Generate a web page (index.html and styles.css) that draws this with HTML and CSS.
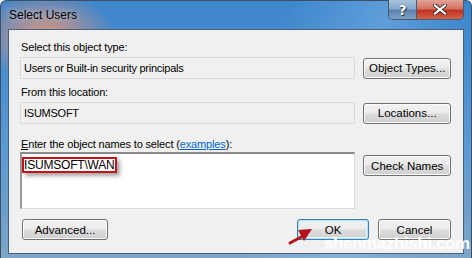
FILE: index.html
```html
<!DOCTYPE html>
<html>
<head>
<meta charset="utf-8">
<link rel="stylesheet" href="styles.css">
</head>
<body>
<div class="window">
  <div class="titlebar">
    <span class="title">Select Users</span>
    <div class="caption-btns">
      <div class="cap help">?</div>
      <div class="cap close">
        <svg width="14" height="11" viewBox="0 0 14 11"><path d="M2 1.5 L12 9.5 M12 1.5 L2 9.5" stroke="#3a2a2a" stroke-width="4" stroke-linecap="square"/><path d="M2 1.5 L12 9.5 M12 1.5 L2 9.5" stroke="#fff" stroke-width="2.2" stroke-linecap="square"/></svg>
      </div>
    </div>
  </div>
  <div class="client">
    <div class="label l1">Select this object type:</div>
    <div class="row r1">
      <div class="robox">Users or Built-in security principals</div>
      <div class="btn">Object Types...</div>
    </div>
    <div class="label l2">From this location:</div>
    <div class="row r2">
      <div class="robox">ISUMSOFT</div>
      <div class="btn">Locations...</div>
    </div>
    <div class="label l3"><u>E</u>nter the object names to select (<span class="link">examples</span>):</div>
    <div class="row r3">
      <div class="textarea"><span class="hl">ISUMSOFT\WAN</span></div>
      <div class="btn cn">Check Names</div>
    </div>
    <div class="bottom">
      <div class="btn adv">Advanced...</div>
      <div class="right">
        <div class="btn ok">OK</div>
        <div class="btn cancel">Cancel</div>
      </div>
    </div>
  </div>
  <svg class="arrow" width="30" height="20" viewBox="0 0 30 20"><path d="M3 17 L16 10" stroke="#b5121b" stroke-width="3" stroke-linecap="round"/><path d="M11 4 L25 3 L17 15 Z" fill="#b5121b"/></svg>
  <div class="watermark">shenmazhishi.com</div>
</div>
</body>
</html>
```
FILE: styles.css
```css
html, body { margin: 0; padding: 0; background: #fff; }
body { font-family: "Liberation Sans", Arial, sans-serif; font-size: 11px; color: #000; }
.window {
  position: relative;
  width: 472px; height: 258px;
  box-sizing: border-box;
  border-radius: 6px 6px 0 0;
  padding: 0 7px 5px 7px;
  background:
    radial-gradient(ellipse 70px 45px at 45px 35px, rgba(232,150,120,0.95), rgba(232,150,120,0) 100%),
    linear-gradient(100deg, rgba(0,0,0,0) 55%, rgba(150,200,240,0.35) 75%, rgba(0,0,0,0) 90%),
    linear-gradient(180deg, #3d85cc 0%, #4a8fd1 30%, #5e9bd2 60%, #6f9fc9 85%, #7ea6c8 100%);
  border: 1px solid #3b4f66;
  border-bottom: none;
}
.titlebar { height: 28px; display: flex; align-items: flex-start; position: relative; }
.title { margin-top: 7px; margin-left: 1px; font-size: 12px; color: #000; text-shadow: 0 0 6px rgba(255,255,255,0.7); }
.caption-btns { position: absolute; right: 0; top: -1px; display: flex; height: 19px; border: 1px solid #4a5a70; border-top: none; border-radius: 0 0 5px 5px; overflow: hidden; }
.cap { height: 19px; display: flex; align-items: center; justify-content: center; }
.help { width: 27px; border-right: 1px solid #4a5a70; background: linear-gradient(180deg, #a9c3dc 0%, #88a9cc 45%, #5c83ad 55%, #7d9fc3 100%); color: #fff; font-weight: bold; font-size: 14px; font-family: "DejaVu Sans", sans-serif; text-shadow: 0 0 1px #233, 1px 1px 0 #334; }
.close { width: 46px; background: linear-gradient(180deg, #e1a498 0%, #d47262 45%, #bf3120 55%, #d0644b 100%); }
.client {
  box-sizing: border-box;
  height: 225px;
  background: #f0f0f0;
  border: 1px solid #4c6077;
  padding: 0 12px 0 11px;
  display: flex; flex-direction: column;
}
.label { height: 14px; line-height: 14px; padding-left: 1px; white-space: nowrap; letter-spacing: -0.15px; }
.l1 { margin-top: 10px; }
.l2 { margin-top: 6px; }
.l3 { margin-top: 13px; }
.link { color: #0066cc; text-decoration: underline; }
.row { display: flex; gap: 8px; align-items: center; }
.r1 { margin-top: 3px; }
.r2 { margin-top: 3px; }
.r3 { margin-top: 1px; align-items: flex-start; }
.robox {
  box-sizing: border-box;
  width: 337px; height: 22px;
  border: 1px solid #dadada;
  background: #f0f0f0;
  padding-left: 3px;
  line-height: 20px;
  white-space: nowrap;
  letter-spacing: -0.25px;
}
.textarea {
  box-sizing: border-box;
  width: 337px; height: 57px;
  background: #fff;
  border-top: 2px solid #8a8a8a;
  border-left: 2px solid #9a9a9a;
  border-right: 1px solid #dcdcdc;
  border-bottom: 1px solid #dcdcdc;
  padding: 3px 0 0 0;
}
.hl {
  display: inline-block;
  border: 2px solid #c4121c;
  padding: 0 1px 0 0;
  line-height: 12px;
  font-size: 12px;
  letter-spacing: -0.2px;
  box-shadow: 3px 3px 4px rgba(0,0,0,0.35);
  background: #fff;
}
.btn {
  box-sizing: border-box;
  width: 88px; height: 21px;
  border: 1px solid #707070;
  border-radius: 3px;
  box-shadow: inset 0 0 0 1px #fcfcfc;
  background: linear-gradient(180deg, #f2f2f2 0%, #ebebeb 48%, #dddddd 52%, #cfcfcf 100%);
  display: flex; align-items: center; justify-content: center;
  white-space: nowrap;
  font-size: 11.5px;
}
.cn { margin-top: 3px; }
.bottom { margin-top: 10px; display: flex; justify-content: space-between; padding-left: 2px; }
.right { display: flex; gap: 9px; }
.adv { width: 86px; }
.ok { width: 72px; border-color: #3c7fb1; box-shadow: inset 0 0 0 1px #b6e3f9, inset 0 0 0 2px #e4f4fc; }
.cancel { width: 73px; }
.arrow { position: absolute; left: 286px; top: 225px; }
.watermark {
  position: absolute; left: 323px; top: 233px;
  font-family: "Liberation Sans", Arial, sans-serif;
  font-weight: bold; font-size: 17px; letter-spacing: -0.4px;
  color: rgba(255,255,255,0.85);
  text-shadow: 0 0 1px rgba(255,255,255,0.6);
}
```
